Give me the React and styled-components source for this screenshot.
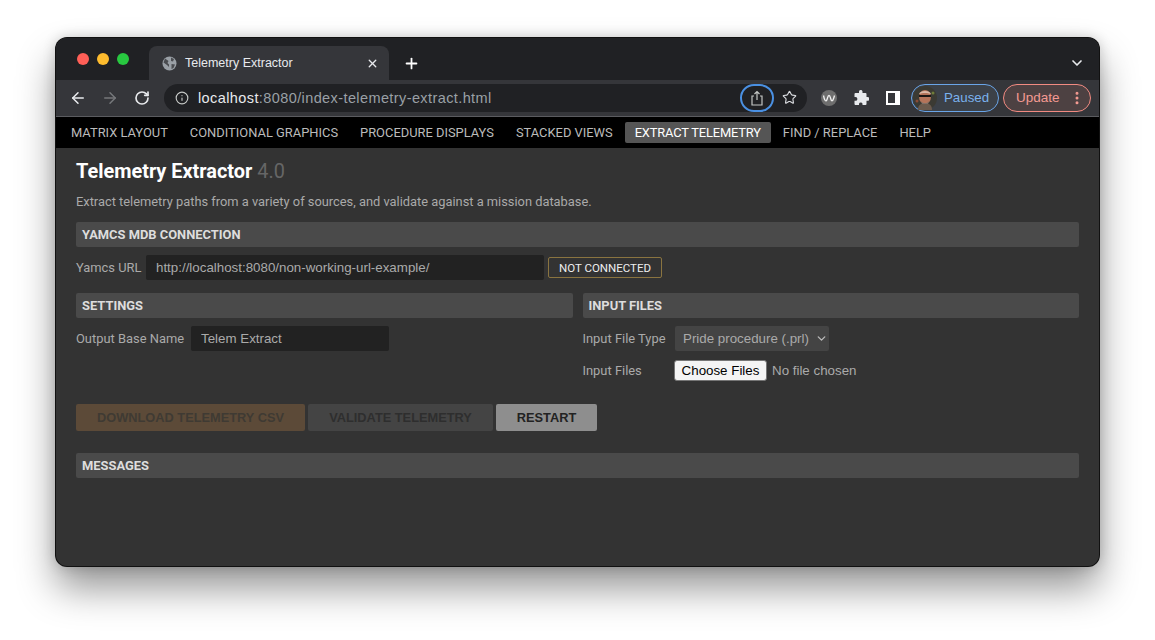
import React from "react";
import styled, { createGlobalStyle } from "styled-components";
import { X, Plus, ChevronDown, ArrowLeft, ArrowRight, RotateCw, Info, Star, EllipsisVertical } from "lucide-react";

const GlobalStyle = createGlobalStyle`
  html, body {
    margin: 0;
    background: #fff;
  }
  * {
    box-sizing: border-box;
  }
`;

const Stage = styled.div`
  width: 1155px;
  height: 640px;
  padding: 38px 56px 0;
  overflow: hidden;
`;

const Window = styled.div`
  width: 1043px;
  height: 528px;
  display: flex;
  flex-direction: column;
  background: #333;
  border-radius: 11px;
  overflow: hidden;
  box-shadow: 0 0 0 1px #111, 0 22px 38px rgba(0, 0, 0, 0.42), 0 0 14px rgba(0, 0, 0, 0.2);
  font-family: Roboto, "Liberation Sans", sans-serif;
`;

const TabStrip = styled.div`
  height: 42px;
  flex: none;
  display: flex;
  align-items: flex-end;
  background: #202124;
  padding: 0 14px 0 21px;
`;

const Lights = styled.div`
  display: flex;
  gap: 8px;
  align-self: flex-start;
  margin-top: 15px;
  width: 72px;
`;

const Light = styled.span`
  width: 12px;
  height: 12px;
  border-radius: 50%;
  background: ${(p) => p.$color};
`;

const Tab = styled.div`
  width: 240px;
  height: 34px;
  display: flex;
  align-items: center;
  padding: 0 10px 0 13px;
  background: #35363a;
  border-radius: 8px 8px 0 0;
  color: #e8eaed;
  font-family: "Liberation Sans", sans-serif;
  font-size: 12.5px;
`;

const TabTitle = styled.span`
  flex: 1;
  margin-left: 8px;
`;

const NewTab = styled.div`
  display: flex;
  height: 34px;
  align-items: center;
  margin-left: 14px;
  color: #fff;
`;

const StripEnd = styled.div`
  display: flex;
  height: 34px;
  align-items: center;
  margin-left: auto;
  color: #e8eaed;
`;

const Toolbar = styled.div`
  height: 37px;
  flex: none;
  display: flex;
  align-items: center;
  background: #35363a;
  padding: 0 8px 1px 6px;
  border-bottom: 1px solid #5b5c60;
`;

const NavIcon = styled.div`
  display: flex;
  flex: none;
  width: 32px;
  justify-content: center;
  color: ${(p) => p.$color || "#e8eaed"};
`;

const Omnibox = styled.div`
  width: 643px;
  height: 28px;
  flex: none;
  display: flex;
  align-items: center;
  margin-left: 6px;
  padding: 0 3px 0 11px;
  background: #202124;
  border-radius: 14px;
  font-family: "Liberation Sans", sans-serif;
  font-size: 14.5px;
  letter-spacing: 0.4px;
  color: #9aa0a6;
`;

const UrlText = styled.span`
  flex: 1;
  margin-left: 9px;
`;

const Host = styled.span`
  color: #e8eaed;
`;

const ShareRing = styled.div`
  width: 34px;
  height: 28px;
  flex: none;
  display: flex;
  align-items: center;
  justify-content: center;
  border: 2px solid #4a90e2;
  border-radius: 14px;
  color: #c4c7c5;
`;

const StarSlot = styled.div`
  display: flex;
  flex: none;
  width: 30px;
  justify-content: center;
  color: #dadce0;
`;

const ExtSlot = styled.div`
  display: flex;
  flex: none;
  width: 32px;
  justify-content: center;
  margin-left: ${(p) => p.$gap || 0}px;
`;

const ProfilePill = styled.div`
  width: 88px;
  height: 28px;
  flex: none;
  margin-left: 2px;
  display: flex;
  align-items: center;
  padding-left: 1px;
  border: 1px solid #6aa5e8;
  border-radius: 14px;
  background: #3c4148;
  color: #7ab1ee;
  font-family: "Liberation Sans", sans-serif;
  font-size: 13.3px;
  gap: 7px;
`;

const UpdatePill = styled.div`
  width: 88px;
  height: 28px;
  flex: none;
  margin-left: 4px;
  display: flex;
  align-items: center;
  justify-content: space-between;
  padding: 0 5px 0 12px;
  border: 1px solid #f28b82;
  border-radius: 14px;
  background: #4d4142;
  color: #f49a92;
  font-family: "Liberation Sans", sans-serif;
  font-size: 13.5px;
`;

const NavBar = styled.nav`
  height: 31px;
  flex: none;
  display: flex;
  align-items: center;
  gap: 2px;
  padding: 0 0 0 5px;
  background: #000;
`;

const NavItem = styled.div`
  height: 21px;
  display: flex;
  align-items: center;
  padding: 0 10px;
  border-radius: 2px;
  font-size: 12.9px;
  letter-spacing: ${(p) => (p.$active ? "-0.17px" : "0")};
  color: ${(p) => (p.$active ? "#fff" : "#bbb")};
  background: ${(p) => (p.$active ? "#555" : "transparent")};
`;

const Content = styled.main`
  flex: 1;
  padding: 11px 20px 0;
  color: #aaa;
`;

const Title = styled.h1`
  margin: 0;
  font-size: 19.9px;
  line-height: 26px;
  font-weight: 700;
  color: #fff;
`;

const Version = styled.span`
  font-weight: 400;
  color: #666;
`;

const Intro = styled.p`
  margin: 9px 0 0;
  font-size: 12.85px;
  line-height: 16px;
  color: #aaa;
`;

const SectionHeader = styled.div`
  height: 25px;
  display: flex;
  align-items: center;
  padding: 0 6px;
  background: #4a4a4a;
  border-radius: 2px;
  font-size: 12.9px;
  font-weight: 700;
  color: #ddd;
`;

const ConnectionSection = styled.section`
  margin-top: 12px;
`;

const Row = styled.div`
  display: flex;
  align-items: center;
  height: 25px;
  margin-top: ${(p) => p.$top || 8}px;
  font-size: 12.9px;
  color: #aaa;
`;

const FieldLabel = styled.label`
  width: ${(p) => p.$width}px;
  flex: none;
`;

const TextInput = styled.input`
  width: ${(p) => p.$width}px;
  height: 25px;
  padding: 0 10px;
  border: none;
  border-radius: 2px;
  background: #222;
  color: #aaa;
  font-family: "Liberation Sans", sans-serif;
  font-size: 13.33px;
  outline: none;
`;

const Status = styled.div`
  width: 114px;
  height: 21px;
  margin-left: 4px;
  display: flex;
  align-items: center;
  justify-content: center;
  border: 1px solid #8a7440;
  border-radius: 2px;
  font-size: 11.5px;
  color: #eee;
`;

const Columns = styled.div`
  display: grid;
  grid-template-columns: 496.5px 496.5px;
  gap: 10px;
  margin-top: 13px;
  height: 88px;
`;

const SelectWrap = styled.div`
  position: relative;
  width: 154px;
  height: 25px;
`;

const TypeSelect = styled.select`
  width: 100%;
  height: 100%;
  padding: 0 8px;
  border: none;
  border-radius: 2px;
  appearance: none;
  background: #444;
  color: #aaa;
  font-family: "Liberation Sans", sans-serif;
  font-size: 13.33px;
`;

const SelectChevron = styled(ChevronDown)`
  position: absolute;
  right: 1px;
  top: 6px;
  color: #bbb;
  pointer-events: none;
`;

const ChooseButton = styled.button`
  width: 93px;
  height: 21px;
  padding: 0;
  border: 1px solid #767676;
  border-radius: 3px;
  background: #f4f4f4;
  color: #000;
  font-family: "Liberation Sans", sans-serif;
  font-size: 13.33px;
`;

const FileName = styled.span`
  margin-left: 5px;
  font-family: "Liberation Sans", sans-serif;
  font-size: 13.33px;
  color: #aaa;
`;

const Actions = styled.div`
  display: flex;
  gap: 3px;
  margin-top: 23px;
`;

const ActionButton = styled.button`
  width: ${(p) => p.$width}px;
  height: 27px;
  padding: 0;
  border: none;
  border-radius: 2px;
  background: ${(p) => p.$bg};
  color: ${(p) => p.$color};
  font-family: "Liberation Sans", sans-serif;
  font-size: 12.8px;
  font-weight: 700;
`;

const MessagesSection = styled.section`
  margin-top: 22px;
`;

const TabGlobe = () => (
  <svg width="15" height="15" viewBox="0 0 15 15">
    <circle cx="7.500" cy="7.500" r="7" fill="#9aa0a6" />
    <path d="M3 2.500 6.500 5 5.500 7 7 8.500V11L5 9 1.500 6.500zM9 1.500l3 1.500-1 2.500L9 5zM9.500 8l3.500.5-1.500 3.500-2 1z" fill="#4a4c50" />
  </svg>
);

const Avatar = () => (
  <svg width="24" height="24" viewBox="0 0 24 24">
    <circle cx="12" cy="12" r="12" fill="#3b3a33" />
    <path d="M5 24c0-5 3-7 7-7s7 2 7 7z" fill="#6b5a4d" />
    <ellipse cx="12" cy="11" rx="6" ry="7" fill="#b5745a" />
    <path d="M6 8c1-4 11-4 12 0-3-1.500-9-1.500-12 0z" fill="#d9b9a8" />
    <rect x="6" y="9" width="12" height="2" fill="#1c1714" />
    <path d="M8 15c2 3 6 3 8 0l-1 3h-6z" fill="#7d7068" />
    <circle cx="20" cy="7" r="1.500" fill="#6f7d3a" />
    <circle cx="4" cy="15" r="1.500" fill="#8a4a35" />
  </svg>
);

const navItems = [
  "MATRIX LAYOUT",
  "CONDITIONAL GRAPHICS",
  "PROCEDURE DISPLAYS",
  "STACKED VIEWS",
  "EXTRACT TELEMETRY",
  "FIND / REPLACE",
  "HELP",
];

export default function App() {
  return (
    <>
      <GlobalStyle />
      <Stage>
        <Window>
          <TabStrip>
            <Lights>
              <Light $color="#ff5f57" />
              <Light $color="#febc2e" />
              <Light $color="#28c840" />
            </Lights>
            <Tab>
              <TabGlobe />
              <TabTitle>Telemetry Extractor</TabTitle>
              <X size={13} strokeWidth={2.5} />
            </Tab>
            <NewTab>
              <Plus size={17} strokeWidth={2.5} />
            </NewTab>
            <StripEnd>
              <ChevronDown size={16} strokeWidth={2.5} />
            </StripEnd>
          </TabStrip>
          <Toolbar>
            <NavIcon>
              <ArrowLeft size={18} strokeWidth={2} />
            </NavIcon>
            <NavIcon $color="#75777a">
              <ArrowRight size={18} strokeWidth={2} />
            </NavIcon>
            <NavIcon>
              <RotateCw size={16} strokeWidth={2.5} />
            </NavIcon>
            <Omnibox>
              <Info size={14} color="#c4c7c5" />
              <UrlText>
                <Host>localhost</Host>:8080/index-telemetry-extract.html
              </UrlText>
              <ShareRing>
                <svg width="14" height="16" viewBox="0 0 14 16" fill="none" stroke="currentColor" strokeWidth="1.2">
                  <path d="M4 6H2v9h10V6h-2" />
                  <path d="M7 10V1.500M4.500 4 7 1.500 9.500 4" />
                </svg>
              </ShareRing>
              <StarSlot>
                <Star size={15} strokeWidth={1.8} />
              </StarSlot>
            </Omnibox>
            <ExtSlot $gap={6}>
              <svg width="16" height="16" viewBox="0 0 16 16">
                <circle cx="8" cy="8" r="8" fill="#6e6e6e" />
                <path d="M2.500 5.500c1 5 2 6 3 5s1-5 2.500-5 1.500 4 2.500 5 2-1 3-5" fill="none" stroke="#eee" strokeWidth="1.300" />
              </svg>
            </ExtSlot>
            <ExtSlot>
              <svg width="16" height="16" viewBox="0 0 16 16" fill="#e8eaed">
                <path d="M6 1.500a1.800 1.800 0 0 1 3.500 0V3h3a1 1 0 0 1 1 1v3h1a1.900 1.900 0 0 1 0 3.800h-1V14a1 1 0 0 1-1 1H9.500v-1.200a1.800 1.800 0 0 0-3.500 0V15H2.500a1 1 0 0 1-1-1v-3.200h1a1.900 1.900 0 0 0 0-3.800h-1V4a1 1 0 0 1 1-1H6z" />
              </svg>
            </ExtSlot>
            <ExtSlot>
              <svg width="14" height="14" viewBox="0 0 14 14">
                <path fillRule="evenodd" d="M0 0h14v14H0zM2 2v10h7V2z" fill="#fff" />
              </svg>
            </ExtSlot>
            <ProfilePill>
              <Avatar />
              Paused
            </ProfilePill>
            <UpdatePill>
              Update
              <EllipsisVertical size={16} strokeWidth={2.5} />
            </UpdatePill>
          </Toolbar>
          <NavBar>
            {navItems.map((item) => (
              <NavItem key={item} $active={item === "EXTRACT TELEMETRY"}>
                {item}
              </NavItem>
            ))}
          </NavBar>
          <Content>
            <Title>
              Telemetry Extractor <Version>4.0</Version>
            </Title>
            <Intro>Extract telemetry paths from a variety of sources, and validate against a mission database.</Intro>
            <ConnectionSection>
              <SectionHeader>YAMCS MDB CONNECTION</SectionHeader>
              <Row>
                <FieldLabel $width={70}>Yamcs URL</FieldLabel>
                <TextInput $width={398} defaultValue="http://localhost:8080/non-working-url-example/" />
                <Status>NOT CONNECTED</Status>
              </Row>
            </ConnectionSection>
            <Columns>
              <section>
                <SectionHeader>SETTINGS</SectionHeader>
                <Row>
                  <FieldLabel $width={115}>Output Base Name</FieldLabel>
                  <TextInput $width={198} defaultValue="Telem Extract" />
                </Row>
              </section>
              <section>
                <SectionHeader>INPUT FILES</SectionHeader>
                <Row>
                  <FieldLabel $width={92.500}>Input File Type</FieldLabel>
                  <SelectWrap>
                    <TypeSelect defaultValue="prl">
                      <option value="prl">Pride procedure (.prl)</option>
                    </TypeSelect>
                    <SelectChevron size={13} strokeWidth={2.5} />
                  </SelectWrap>
                </Row>
                <Row $top={7}>
                  <FieldLabel $width={91.500}>Input Files</FieldLabel>
                  <ChooseButton>Choose Files</ChooseButton>
                  <FileName>No file chosen</FileName>
                </Row>
              </section>
            </Columns>
            <Actions>
              <ActionButton $width={229} $bg="#5c4a38" $color="#3f3a33">DOWNLOAD TELEMETRY CSV</ActionButton>
              <ActionButton $width={185} $bg="#444" $color="#2e2e2e">VALIDATE TELEMETRY</ActionButton>
              <ActionButton $width={101} $bg="#8e8e8e" $color="#222">RESTART</ActionButton>
            </Actions>
            <MessagesSection>
              <SectionHeader>MESSAGES</SectionHeader>
            </MessagesSection>
          </Content>
        </Window>
      </Stage>
    </>
  );
}
